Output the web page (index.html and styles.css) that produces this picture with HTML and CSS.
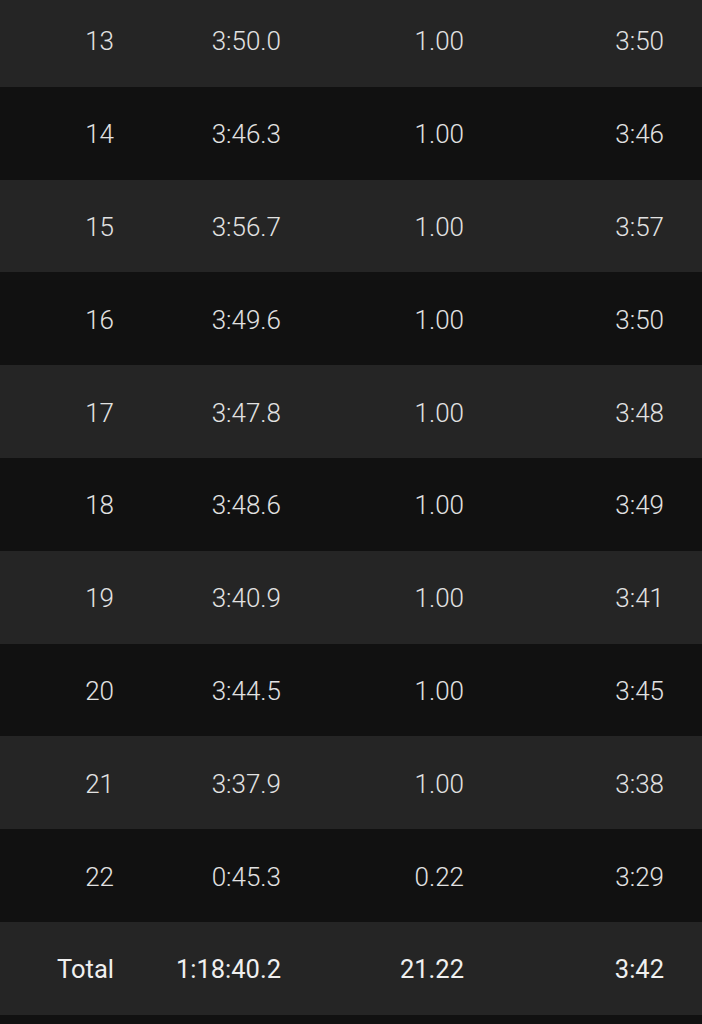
FILE: index.html
```html
<!DOCTYPE html>
<html>
<head>
<meta charset="utf-8">
<link rel="stylesheet" href="styles.css">
</head>
<body>
<div class="splits">
  <div class="row light"><span>13</span><span>3:50.0</span><span>1.00</span><span>3:50</span></div>
  <div class="row dark"><span>14</span><span>3:46.3</span><span>1.00</span><span>3:46</span></div>
  <div class="row light"><span>15</span><span>3:56.7</span><span>1.00</span><span>3:57</span></div>
  <div class="row dark"><span>16</span><span>3:49.6</span><span>1.00</span><span>3:50</span></div>
  <div class="row light"><span>17</span><span>3:47.8</span><span>1.00</span><span>3:48</span></div>
  <div class="row dark"><span>18</span><span>3:48.6</span><span>1.00</span><span>3:49</span></div>
  <div class="row light"><span>19</span><span>3:40.9</span><span>1.00</span><span>3:41</span></div>
  <div class="row dark"><span>20</span><span>3:44.5</span><span>1.00</span><span>3:45</span></div>
  <div class="row light"><span>21</span><span>3:37.9</span><span>1.00</span><span>3:38</span></div>
  <div class="row dark"><span>22</span><span>0:45.3</span><span>0.22</span><span>3:29</span></div>
  <div class="row light total"><span>Total</span><span>1:18:40.2</span><span>21.22</span><span>3:42</span></div>
</div>
</body>
</html>
```
FILE: styles.css
```css
html, body {
  margin: 0;
  padding: 0;
  background: #111111;
  height: 100%;
  overflow: hidden;
}
.splits {
  margin-top: -6px;
  font-family: Roboto, "Noto Sans", sans-serif;
}
.row {
  display: grid;
  grid-template-columns: 114px 167px 183px 200px;
  height: 92.8px;
  align-items: center;
  font-size: 26px;
  font-weight: 300;
  color: #e2e2e2;
}
.row span {
  text-align: right;
  padding-top: 2px;
}
.light {
  background: #252525;
}
.dark {
  background: #111111;
}
.total {
  font-size: 25.5px;
  font-weight: 400;
  color: #f0f0f0;
}
```
